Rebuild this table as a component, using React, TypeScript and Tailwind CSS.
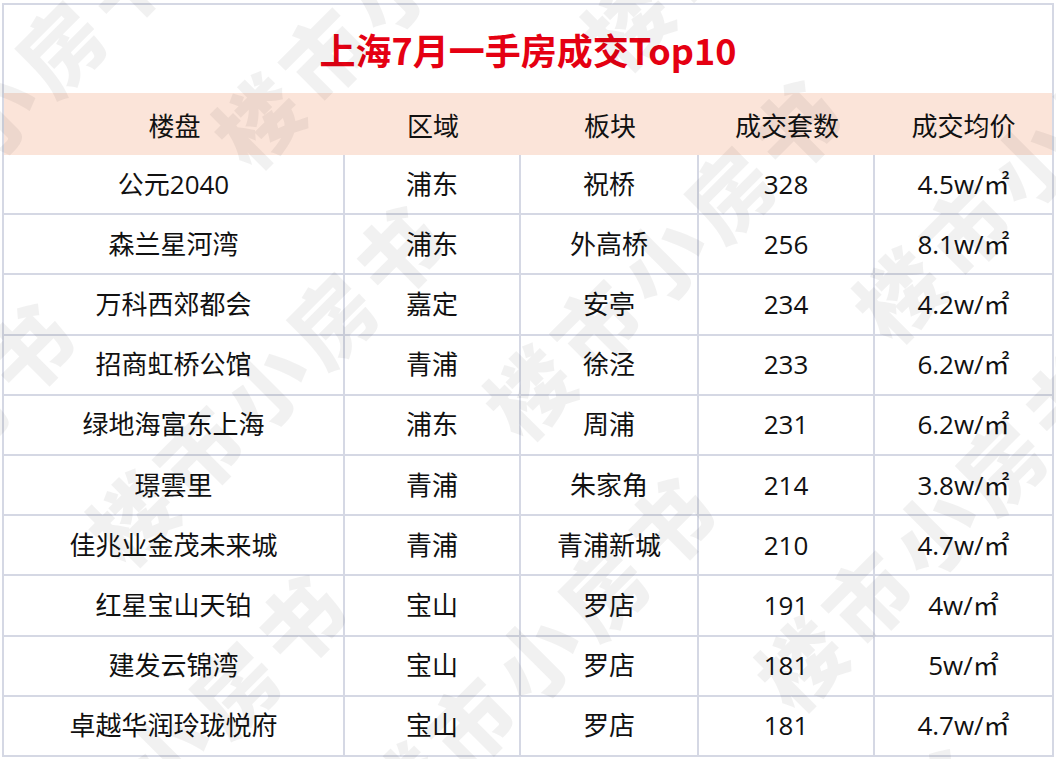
import React from 'react';

type Row = { name: string; area: string; block: string; deals: string; price: string };

const rows: Row[] = [
  { name: '公元2040', area: '浦东', block: '祝桥', deals: '328', price: '4.5w/㎡' },
  { name: '森兰星河湾', area: '浦东', block: '外高桥', deals: '256', price: '8.1w/㎡' },
  { name: '万科西郊都会', area: '嘉定', block: '安亭', deals: '234', price: '4.2w/㎡' },
  { name: '招商虹桥公馆', area: '青浦', block: '徐泾', deals: '233', price: '6.2w/㎡' },
  { name: '绿地海富东上海', area: '浦东', block: '周浦', deals: '231', price: '6.2w/㎡' },
  { name: '璟雲里', area: '青浦', block: '朱家角', deals: '214', price: '3.8w/㎡' },
  { name: '佳兆业金茂未来城', area: '青浦', block: '青浦新城', deals: '210', price: '4.7w/㎡' },
  { name: '红星宝山天铂', area: '宝山', block: '罗店', deals: '191', price: '4w/㎡' },
  { name: '建发云锦湾', area: '宝山', block: '罗店', deals: '181', price: '5w/㎡' },
  { name: '卓越华润玲珑悦府', area: '宝山', block: '罗店', deals: '181', price: '4.7w/㎡' },
];

const headers = ['楼盘', '区域', '板块', '成交套数', '成交均价'];

const gridCols = 'grid grid-cols-[341px_176px_178px_176px_1fr]';

// faint diagonal watermark, sits over the whole table
const Watermark: React.FC = () => (
  <div className="pointer-events-none absolute inset-0 overflow-hidden" aria-hidden>
    <div className="absolute left-1/2 top-1/2 flex -translate-x-[58%] -translate-y-1/2 -rotate-45 flex-col gap-[84px]">
      {Array.from({ length: 9 }).map((_, i) => (
        <div
          key={i}
          className={`flex gap-[230px] whitespace-nowrap text-[84px] font-black leading-[108px] tracking-[10px] text-black/[0.055] ${
            i % 2 === 0 ? 'ml-[0px]' : 'ml-[-330px]'
          }`}
          style={{ fontFamily: '"Noto Sans CJK SC", sans-serif' }}
        >
          {Array.from({ length: 5 }).map((__, j) => (
            <span key={j}>楼市小房书</span>
          ))}
        </div>
      ))}
    </div>
  </div>
);

export default function App() {
  return (
    <div
      className="relative h-[759px] w-[1056px] overflow-hidden bg-white pl-[2px] pt-[3px] text-[#111]"
      style={{ fontFamily: '"Open Sans", "Noto Sans CJK SC", sans-serif' }}
    >
      <div className="w-[1052px] border-x-2 border-t-2 border-[#d5d8e4]">
        <div
          className="flex h-[88px] items-center justify-center text-[36px] font-bold text-[#e50012]"
          style={{ fontFamily: '"Noto Sans CJK SC", sans-serif' }}
        >
          上海7月一手房成交Top10
        </div>

        <div className={`${gridCols} h-[62px] bg-[#fbe4d9] text-[26px]`}>
          {headers.map((h) => (
            <div key={h} className="flex items-center justify-center" style={{ fontFamily: '"Noto Sans CJK SC", sans-serif' }}>
              {h}
            </div>
          ))}
        </div>

        {rows.map((r, idx) => (
          <div key={idx} className={`${gridCols} h-[60.2px] border-b-2 border-[#d5d8e4] text-[26px]`}>
            <div className="flex items-center justify-center border-r-2 border-[#d5d8e4]">{r.name}</div>
            <div className="flex items-center justify-center border-r-2 border-[#d5d8e4]">{r.area}</div>
            <div className="flex items-center justify-center border-r-2 border-[#d5d8e4]">{r.block}</div>
            <div className="flex items-center justify-center border-r-2 border-[#d5d8e4]">{r.deals}</div>
            <div className="flex items-center justify-center">{r.price}</div>
          </div>
        ))}
      </div>

      <Watermark />
    </div>
  );
}
